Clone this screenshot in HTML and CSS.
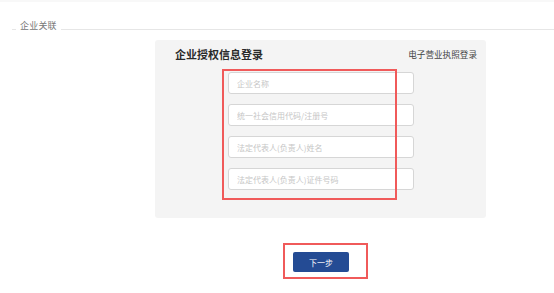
FILE: index.html
```html
<!DOCTYPE html>
<html lang="zh-CN">
<head>
<meta charset="utf-8">
<title>企业关联</title>
<link rel="stylesheet" href="styles.css">
</head>
<body>
<div class="topbar"></div>
<div class="legend-row">
  <span class="rule rule-short"></span>
  <span class="legend-text">企业关联</span>
  <span class="rule rule-long"></span>
</div>
<div class="panel">
  <div class="panel-head">
    <span class="panel-title">企业授权信息登录</span>
    <a class="panel-link">电子营业执照登录</a>
  </div>
  <div class="form">
    <input class="field" type="text" placeholder="企业名称">
    <input class="field" type="text" placeholder="统一社会信用代码/注册号">
    <input class="field" type="text" placeholder="法定代表人(负责人)姓名">
    <input class="field" type="text" placeholder="法定代表人(负责人)证件号码">
    <div class="mark mark-form"></div>
  </div>
</div>
<div class="actions">
  <div class="btn-wrap">
    <button class="btn-next" type="button">下一步</button>
    <div class="mark mark-btn"></div>
  </div>
</div>
</body>
</html>
```
FILE: styles.css
```css
* { box-sizing: border-box; }
html, body { margin: 0; padding: 0; background: #fff; }
body {
  width: 554px;
  height: 293px;
  overflow: hidden;
  font-family: "Noto Sans CJK SC", "Noto Sans", sans-serif;
  color: #333;
}
.topbar {
  height: 2px;
  background: #f8f8f8;
}
.legend-row {
  display: flex;
  align-items: flex-end;
  margin-top: 18px;
  height: 10px;
  padding-left: 12px;
}
.rule {
  height: 1px;
  background: #e6e6e6;
}
.rule-short { width: 4px; }
.rule-long { flex: 1; }
.legend-text {
  font-size: 9px;
  line-height: 10px;
  color: #777;
  padding: 0 4px;
  margin-bottom: -1px;
  letter-spacing: 0.2px;
}
.panel {
  margin: 10px 0 0 155px;
  width: 331px;
  height: 178px;
  background: #f4f4f4;
  border-radius: 3px;
  padding: 7px 9px 0 20px;
}
.panel-head {
  display: flex;
  justify-content: space-between;
  align-items: center;
  height: 14px;
}
.panel-title {
  font-size: 11px;
  font-weight: bold;
  color: #2a2a2a;
  line-height: 14px;
}
.panel-link {
  font-size: 8.6px;
  color: #444;
  line-height: 14px;
  cursor: pointer;
}
.form {
  position: relative;
  display: flex;
  flex-direction: column;
  gap: 10px;
  margin: 11px 0 0 53px;
  width: 186px;
}
.field {
  display: block;
  width: 186px;
  height: 22px;
  border: 1px solid #d6d6d6;
  border-radius: 3px;
  background: #fff;
  padding: 0 0 0 8px;
  font-family: inherit;
  font-size: 8px;
  color: #333;
  outline: none;
}
.field::placeholder { color: #c6c6c6; }
.mark {
  position: absolute;
  border: 2px solid #f05a5a;
  pointer-events: none;
}
.mark-form {
  left: -6px;
  top: -3px;
  width: 175px;
  height: 131px;
}
.actions {
  display: flex;
  padding-left: 293px;
  margin-top: 34px;
}
.btn-wrap { position: relative; }
.btn-next {
  display: block;
  width: 56px;
  height: 20px;
  border: none;
  border-radius: 2px;
  background: #244b94;
  color: #fff;
  font-family: inherit;
  font-size: 8px;
  padding: 0;
  cursor: pointer;
}
.mark-btn {
  left: -10px;
  top: -9px;
  width: 85px;
  height: 36px;
}
```
